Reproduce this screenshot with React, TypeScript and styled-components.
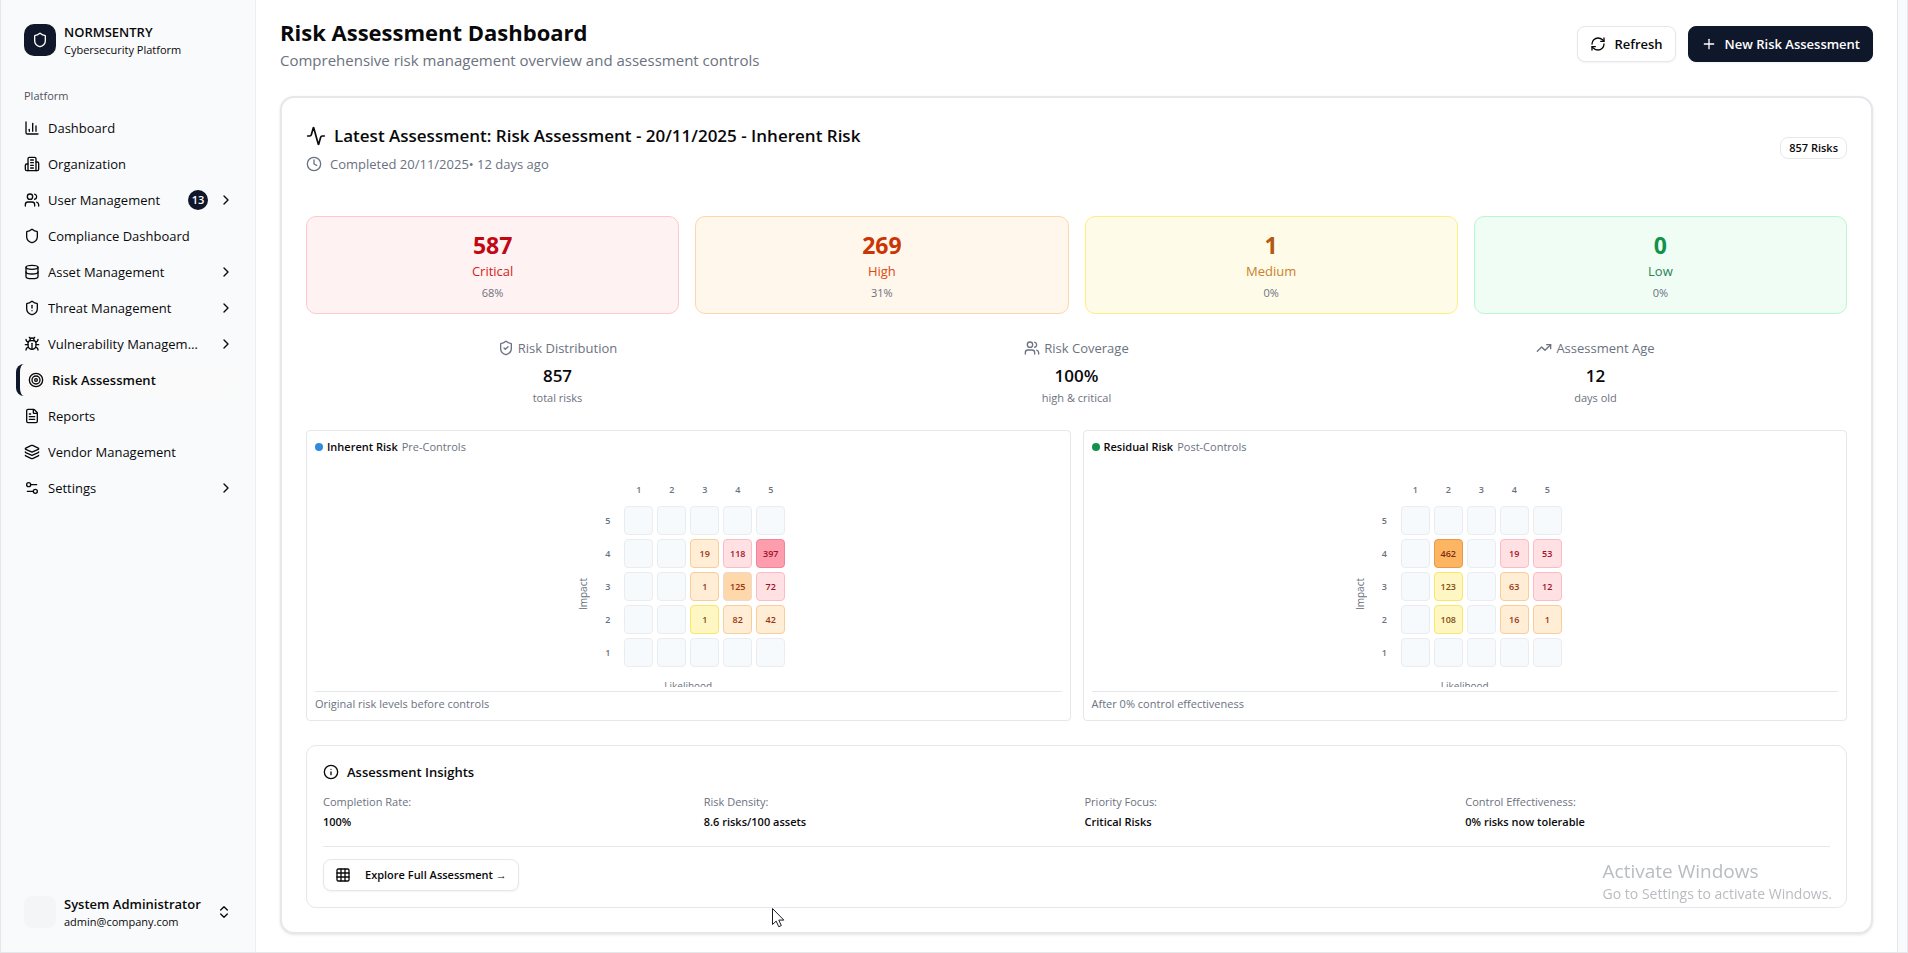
import React from 'react';
import styled, { createGlobalStyle } from 'styled-components';
import {
  Activity,
  Bug,
  ChartColumn,
  ChevronRight,
  ChevronsUpDown,
  Clock,
  Database,
  FileText,
  Grid3x3,
  Info,
  Layers,
  Plus,
  RefreshCw,
  Settings2,
  Shield,
  ShieldAlert,
  ShieldCheck,
  Target,
  TrendingUp,
  Users,
} from 'lucide-react';

const ink = '#0f172a';
const text = '#09090b';
const muted = '#6b7280';
const line = '#e5e7eb';
const panel = '#f9fafb';

const GlobalStyle = createGlobalStyle`
  *, *::before, *::after { box-sizing: border-box; }
  body {
    margin: 0;
    background: ${panel};
    color: ${text};
    font-family: "Open Sans", "Noto Sans", sans-serif;
    font-size: 13px;
    line-height: 20px;
  }
  h1, h2, h3, p, ul, dl, dd { margin: 0; padding: 0; }
  button { font: inherit; color: inherit; cursor: pointer; }
  a { color: inherit; text-decoration: none; }
  svg { flex-shrink: 0; display: block; }
`;

const Shell = styled.div`
  display: grid;
  grid-template-columns: 256px minmax(0, 1fr);
  min-height: 100vh;
  padding-right: 9px;
  border: solid ${line};
  border-width: 0 1px 1px 0;
`;

/* ---------- Sidebar ---------- */

const Sidebar = styled.aside`
  display: flex;
  flex-direction: column;
  background: ${panel};
  border-left: 1px solid ${line};
  border-right: 1px solid #eceef1;
  padding: 24px 15px;
`;

const Brand = styled.a`
  display: flex;
  align-items: center;
  gap: 8px;
  height: 32px;
  padding: 0 8px;
`;

const BrandMark = styled.span`
  display: grid;
  place-items: center;
  width: 32px;
  height: 32px;
  border-radius: 10px;
  background: ${ink};
  color: #fff;
`;

const TwoLines = styled.span`
  display: grid;
  flex: 1;
  min-width: 0;
  padding-top: 2px;
  text-align: left;
  line-height: 18px;
`;

const StrongLine = styled.span`
  font-size: 13px;
  font-weight: 600;
`;

const SmallLine = styled.span`
  font-size: 11px;
`;

const GroupLabel = styled.h3`
  margin-top: 32px;
  padding: 0 8px;
  height: 24px;
  font-size: 11px;
  font-weight: 400;
  line-height: 16px;
  color: #52525b;
`;

const Menu = styled.ul`
  display: grid;
  grid-template-columns: minmax(0, 1fr);
  gap: 4px;
  list-style: none;
`;

const MenuLink = styled.a<{ $active?: boolean }>`
  display: flex;
  align-items: center;
  gap: 8px;
  height: 32px;
  padding: 0 6px 0 8px;
  border-left: ${p => (p.$active ? `4px solid ${ink}` : '0')};
  border-radius: 8px;
  background: ${p => (p.$active ? '#fafafa' : 'transparent')};
  font-weight: ${p => (p.$active ? 600 : 400)};
`;

const MenuText = styled.span`
  flex: 1;
  min-width: 0;
  padding-right: 6px;
  overflow: hidden;
  white-space: nowrap;
  text-overflow: ellipsis;
`;

const CountBadge = styled.span`
  display: grid;
  place-items: center;
  width: 20px;
  height: 20px;
  margin-right: 2px;
  border-radius: 10px;
  background: ${ink};
  color: #fff;
  font-size: 11px;
  font-weight: 600;
`;

const UserButton = styled.button`
  display: flex;
  align-items: center;
  gap: 8px;
  height: 32px;
  margin-top: auto;
  padding: 0 8px;
  border: 0;
  background: none;
`;

const Avatar = styled.span`
  width: 32px;
  height: 32px;
  border-radius: 8px;
  background: #f4f5f6;
`;

/* ---------- Main ---------- */

const Main = styled.main`
  display: flex;
  flex-direction: column;
  gap: 24px;
  padding: 16px 24px;
  background: #fff;
  border-right: 1px solid ${line};
`;

const PageHeader = styled.header`
  display: flex;
  align-items: center;
  justify-content: space-between;
`;

const PageTitle = styled.h1`
  font-size: 22px;
  font-weight: 700;
  line-height: 32px;
`;

const PageSubtitle = styled.p`
  font-size: 15px;
  line-height: 24px;
  color: ${muted};
`;

const Actions = styled.div`
  display: flex;
  gap: 12px;
`;

const Button = styled.button<{ $primary?: boolean; $small?: boolean }>`
  display: inline-flex;
  align-items: center;
  gap: ${p => (p.$small ? 14 : 8)}px;
  height: ${p => (p.$small ? 32 : 36)}px;
  padding: 0 ${p => (p.$small ? 11 : 12)}px;
  border: 1px solid ${p => (p.$primary ? ink : line)};
  border-radius: 8px;
  background: ${p => (p.$primary ? ink : '#fff')};
  color: ${p => (p.$primary ? '#fff' : text)};
  font-size: ${p => (p.$small ? 11 : 13)}px;
  font-weight: 600;
  box-shadow: 0 1px 2px rgba(0, 0, 0, 0.05);
`;

const Card = styled.section`
  padding: 24px;
  border: 2px solid ${line};
  border-radius: 14px;
  background: #fff;
  box-shadow: 0 1px 3px rgba(0, 0, 0, 0.1);
`;

const CardHeader = styled.div`
  display: flex;
  align-items: center;
  justify-content: space-between;
  margin-bottom: 42px;
`;

const CardTitle = styled.h2`
  display: flex;
  align-items: center;
  gap: 8px;
  font-size: 17px;
  font-weight: 600;
  line-height: 28px;
`;

const CardMeta = styled.p`
  display: flex;
  align-items: center;
  gap: 8px;
  margin-top: 4px;
  color: ${muted};
`;

const RiskBadge = styled.span`
  padding: 2px 8px;
  border: 1px solid ${line};
  border-radius: 8px;
  font-size: 11px;
  font-weight: 600;
  line-height: 16px;
`;

const Columns = styled.div<{ $count: number; $gap: number }>`
  display: grid;
  grid-template-columns: repeat(${p => p.$count}, minmax(0, 1fr));
  gap: ${p => p.$gap}px;
`;

const Stack = styled.div`
  display: flex;
  flex-direction: column;
  gap: 24px;
`;

const StatTile = styled.div<{ $bg: string; $border: string }>`
  padding: 12px;
  border: 1px solid ${p => p.$border};
  border-radius: 10px;
  background: ${p => p.$bg};
  text-align: center;
`;

const StatValue = styled.p<{ $color: string }>`
  font-size: 23px;
  font-weight: 700;
  line-height: 32px;
  color: ${p => p.$color};
`;

const StatLabel = styled.p<{ $color: string }>`
  color: ${p => p.$color};
`;

const Caption = styled.p`
  font-size: 11px;
  line-height: 16px;
  color: ${muted};
`;

const StatCaption = styled(Caption)`
  margin-top: 4px;
`;

const Metric = styled.div`
  text-align: center;
`;

const MetricLabel = styled.p`
  display: flex;
  align-items: center;
  justify-content: center;
  gap: 4px;
  margin-bottom: 4px;
  color: ${muted};
`;

const MetricValue = styled.p`
  font-size: 17px;
  font-weight: 600;
  line-height: 28px;
`;

/* ---------- Risk matrices ---------- */

const MatrixPanel = styled.section`
  padding: 8px;
  border: 1px solid ${line};
  border-radius: 4px;
`;

const MatrixHeader = styled.div`
  display: flex;
  align-items: center;
  gap: 4px;
  font-size: 11px;
  line-height: 16px;
  color: ${muted};
`;

const Dot = styled.span<{ $color: string }>`
  width: 8px;
  height: 8px;
  border-radius: 4px;
  background: ${p => p.$color};
`;

const MatrixName = styled.h3`
  font-size: 11px;
  font-weight: 600;
  color: ${text};
`;

const MatrixBody = styled.div`
  display: grid;
  grid-template-columns: 16px auto 12px;
  justify-content: center;
  align-content: start;
  height: 232px;
  padding-top: 18px;
  overflow: hidden;
`;

const AxisLabel = styled.span`
  font-size: 10px;
  font-weight: 500;
  line-height: 16px;
  color: ${muted};
`;

const ImpactLabel = styled(AxisLabel)`
  align-self: center;
  justify-self: center;
  padding-bottom: 44px;
  writing-mode: vertical-rl;
  transform: rotate(180deg);
`;

const LikelihoodLabel = styled(AxisLabel)`
  grid-column: 1 / -1;
  margin-top: 7px;
  text-align: center;
`;

const MatrixTable = styled.table`
  border-collapse: separate;
  border-spacing: 4px;
`;

const ColumnHead = styled.th`
  width: 29px;
  height: 25px;
  padding: 0;
  font-size: 9px;
  font-weight: 600;
  line-height: 16px;
  color: ${muted};
`;

const RowHead = styled.th`
  width: 25px;
  padding: 0;
  font-size: 9px;
  font-weight: 600;
  line-height: 16px;
  color: ${muted};
`;

type Tone = 'empty' | 'yellow' | 'orange' | 'orangeMid' | 'orangeDeep' | 'red' | 'redDeep';

const tones: Record<Tone, [string, string, string]> = {
  empty: ['#f7fafc', '#e9edf1', muted],
  yellow: ['#fef6c3', '#fde663', '#854d0e'],
  orange: ['#ffedd5', '#f9cd97', '#9a3412'],
  orangeMid: ['#fed7aa', '#e9dccb', '#9a3412'],
  orangeDeep: ['#fdb562', '#e39a4b', '#7c2d12'],
  red: ['#ffe1e4', '#fdbcc4', '#a30f26'],
  redDeep: ['#fd9dae', '#f4829b', '#a30f26'],
};

const Cell = styled.td<{ $tone: Tone }>`
  width: 29px;
  height: 29px;
  padding: 0;
  border: 1px solid ${p => tones[p.$tone][1]};
  border-radius: 4px;
  background: ${p => tones[p.$tone][0]};
  color: ${p => tones[p.$tone][2]};
  font-size: 9px;
  font-weight: 600;
  line-height: 16px;
  text-align: center;
`;

const MatrixFooter = styled(Caption)`
  margin-top: 4px;
  padding-top: 4px;
  border-top: 1px solid ${line};
`;

/* ---------- Insights ---------- */

const Insights = styled.section`
  padding: 16px;
  border: 1px solid ${line};
  border-radius: 10px;
`;

const InsightsTitle = styled.h3`
  display: flex;
  align-items: center;
  gap: 8px;
  margin-bottom: 12px;
  font-size: 13px;
  font-weight: 600;
`;

const InsightValue = styled.p`
  margin-top: 4px;
  font-size: 11px;
  font-weight: 600;
  line-height: 16px;
`;

const InsightsFooter = styled.div`
  display: flex;
  margin-top: 16px;
  padding-top: 12px;
  border-top: 1px solid ${line};
`;

/* ---------- Desktop overlays ---------- */

const Watermark = styled.div`
  position: fixed;
  right: 76px;
  bottom: 49px;
  color: #b9bcc0;
  font-size: 14px;
  line-height: 20px;
  pointer-events: none;
`;

const WatermarkTitle = styled.p`
  font-size: 19px;
  line-height: 26px;
`;

const Pointer = styled.svg`
  position: fixed;
  left: 771px;
  top: 907px;
  pointer-events: none;
`;

/* ---------- Data ---------- */

function BuildingIcon() {
  return (
    <svg width="16" height="16" viewBox="0 0 24 24" fill="none" stroke="currentColor" strokeWidth="2" strokeLinecap="round" strokeLinejoin="round">
      <path d="M6 22V4a2 2 0 0 1 2-2h8a2 2 0 0 1 2 2v18Z" />
      <path d="M6 12H4a2 2 0 0 0-2 2v6a2 2 0 0 0 2 2h2" />
      <path d="M18 9h2a2 2 0 0 1 2 2v9a2 2 0 0 1-2 2h-2" />
      <path d="M10 6h4M10 10h4M10 14h4M10 18h4" />
    </svg>
  );
}

const menu: { label: string; icon: React.ReactNode; more?: boolean; count?: number; active?: boolean }[] = [
  { label: 'Dashboard', icon: <ChartColumn size={16} /> },
  { label: 'Organization', icon: <BuildingIcon /> },
  { label: 'User Management', icon: <Users size={16} />, count: 13, more: true },
  { label: 'Compliance Dashboard', icon: <Shield size={16} /> },
  { label: 'Asset Management', icon: <Database size={16} />, more: true },
  { label: 'Threat Management', icon: <ShieldAlert size={16} />, more: true },
  { label: 'Vulnerability Management', icon: <Bug size={16} />, more: true },
  { label: 'Risk Assessment', icon: <Target size={16} />, active: true },
  { label: 'Reports', icon: <FileText size={16} /> },
  { label: 'Vendor Management', icon: <Layers size={16} /> },
  { label: 'Settings', icon: <Settings2 size={16} />, more: true },
];

const stats = [
  { value: 587, label: 'Critical', pct: '68%', bg: '#fef2f2', border: '#ffc9cc', strong: '#c10712', soft: '#d81a20' },
  { value: 269, label: 'High', pct: '31%', bg: '#fff6ec', border: '#ffd6a7', strong: '#ca3504', soft: '#dc4a0c' },
  { value: 1, label: 'Medium', pct: '0%', bg: '#fefbe8', border: '#fdee85', strong: '#b45a10', soft: '#c9812c' },
  { value: 0, label: 'Low', pct: '0%', bg: '#effdf4', border: '#b9f8cf', strong: '#10924a', soft: '#2b8456' },
];

const metrics = [
  { icon: <ShieldCheck size={16} />, label: 'Risk Distribution', value: '857', note: 'total risks' },
  { icon: <Users size={16} />, label: 'Risk Coverage', value: '100%', note: 'high & critical' },
  { icon: <TrendingUp size={16} />, label: 'Assessment Age', value: '12', note: 'days old' },
];

type Entry = [number, Tone] | null;

const inherent: Entry[][] = [
  [null, null, null, null, null],
  [null, null, [19, 'orange'], [118, 'red'], [397, 'redDeep']],
  [null, null, [1, 'orange'], [125, 'orangeMid'], [72, 'red']],
  [null, null, [1, 'yellow'], [82, 'orange'], [42, 'orange']],
  [null, null, null, null, null],
];

const residual: Entry[][] = [
  [null, null, null, null, null],
  [null, [462, 'orangeDeep'], null, [19, 'red'], [53, 'red']],
  [null, [123, 'yellow'], null, [63, 'orange'], [12, 'red']],
  [null, [108, 'yellow'], null, [16, 'orange'], [1, 'orange']],
  [null, null, null, null, null],
];

const insights = [
  ['Completion Rate:', '100%'],
  ['Risk Density:', '8.6 risks/100 assets'],
  ['Priority Focus:', 'Critical Risks'],
  ['Control Effectiveness:', '0% risks now tolerable'],
];

function RiskMatrix(props: { name: string; phase: string; color: string; rows: Entry[][]; note: string }) {
  return (
    <MatrixPanel>
      <MatrixHeader>
        <Dot $color={props.color} />
        <MatrixName>{props.name}</MatrixName>
        <span>{props.phase}</span>
      </MatrixHeader>
      <MatrixBody>
        <ImpactLabel>Impact</ImpactLabel>
        <MatrixTable>
          <thead>
            <tr>
              <td />
              {[1, 2, 3, 4, 5].map(n => (
                <ColumnHead key={n} scope="col">{n}</ColumnHead>
              ))}
            </tr>
          </thead>
          <tbody>
            {props.rows.map((row, r) => (
              <tr key={r}>
                <RowHead scope="row">{5 - r}</RowHead>
                {row.map((entry, c) => (
                  <Cell key={c} $tone={entry ? entry[1] : 'empty'}>{entry ? entry[0] : null}</Cell>
                ))}
              </tr>
            ))}
          </tbody>
        </MatrixTable>
        <LikelihoodLabel>Likelihood</LikelihoodLabel>
      </MatrixBody>
      <MatrixFooter>{props.note}</MatrixFooter>
    </MatrixPanel>
  );
}

export default function App() {
  return (
    <>
      <GlobalStyle />
      <Shell>
        <Sidebar>
          <Brand href="#">
            <BrandMark><Shield size={16} /></BrandMark>
            <TwoLines>
              <StrongLine>NORMSENTRY</StrongLine>
              <SmallLine>Cybersecurity Platform</SmallLine>
            </TwoLines>
          </Brand>
          <GroupLabel>Platform</GroupLabel>
          <nav>
            <Menu>
              {menu.map(item => (
                <li key={item.label}>
                  <MenuLink href="#" $active={item.active}>
                    {item.icon}
                    <MenuText>{item.label}</MenuText>
                    {item.count && <CountBadge>{item.count}</CountBadge>}
                    {item.more && <ChevronRight size={16} />}
                  </MenuLink>
                </li>
              ))}
            </Menu>
          </nav>
          <UserButton type="button">
            <Avatar />
            <TwoLines>
              <StrongLine>System Administrator</StrongLine>
              <SmallLine>admin@company.com</SmallLine>
            </TwoLines>
            <ChevronsUpDown size={16} />
          </UserButton>
        </Sidebar>

        <Main>
          <PageHeader>
            <div>
              <PageTitle>Risk Assessment Dashboard</PageTitle>
              <PageSubtitle>Comprehensive risk management overview and assessment controls</PageSubtitle>
            </div>
            <Actions>
              <Button type="button"><RefreshCw size={16} />Refresh</Button>
              <Button type="button" $primary><Plus size={16} />New Risk Assessment</Button>
            </Actions>
          </PageHeader>

          <Card>
            <CardHeader>
              <div>
                <CardTitle><Activity size={20} />Latest Assessment: Risk Assessment - 20/11/2025 - Inherent Risk</CardTitle>
                <CardMeta><Clock size={16} />Completed 20/11/2025• 12 days ago</CardMeta>
              </div>
              <RiskBadge>857 Risks</RiskBadge>
            </CardHeader>

            <Stack>
              <Columns $count={4} $gap={16}>
                {stats.map(s => (
                  <StatTile key={s.label} $bg={s.bg} $border={s.border}>
                    <StatValue $color={s.strong}>{s.value}</StatValue>
                    <StatLabel $color={s.soft}>{s.label}</StatLabel>
                    <StatCaption>{s.pct}</StatCaption>
                  </StatTile>
                ))}
              </Columns>

              <Columns $count={3} $gap={16}>
                {metrics.map(m => (
                  <Metric key={m.label}>
                    <MetricLabel>{m.icon}{m.label}</MetricLabel>
                    <MetricValue>{m.value}</MetricValue>
                    <Caption>{m.note}</Caption>
                  </Metric>
                ))}
              </Columns>

              <Columns $count={2} $gap={12}>
                <RiskMatrix name="Inherent Risk" phase="Pre-Controls" color="#2f8be0" rows={inherent} note="Original risk levels before controls" />
                <RiskMatrix name="Residual Risk" phase="Post-Controls" color="#10924a" rows={residual} note="After 0% control effectiveness" />
              </Columns>

              <Insights>
                <InsightsTitle><Info size={16} />Assessment Insights</InsightsTitle>
                <Columns $count={4} $gap={16}>
                  {insights.map(([label, value]) => (
                    <div key={label}>
                      <Caption>{label}</Caption>
                      <InsightValue>{value}</InsightValue>
                    </div>
                  ))}
                </Columns>
                <InsightsFooter>
                  <Button type="button" $small><Grid3x3 size={16} />Explore Full Assessment →</Button>
                </InsightsFooter>
              </Insights>
            </Stack>
          </Card>
        </Main>
      </Shell>

      <Watermark>
        <WatermarkTitle>Activate Windows</WatermarkTitle>
        <p>Go to Settings to activate Windows.</p>
      </Watermark>
      <Pointer width="14" height="21" viewBox="0 0 14 21">
        <path d="M1.5 1.5v16l3.7-3.4 2.5 5.6 2.6-1.1-2.5-5.5h5z" fill="#fff" stroke="#1b1b2b" strokeWidth="1" />
      </Pointer>
    </>
  );
}
